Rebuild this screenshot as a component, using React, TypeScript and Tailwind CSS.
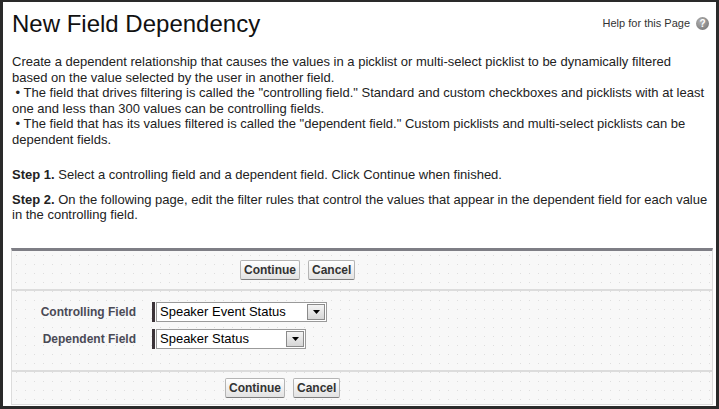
import React from 'react';

function Btn({ label }: { label: string }) {
  return (
    <button className="h-[20px] px-[3px] border border-[#b5b5b5] border-b-[#7f7f7f] rounded-[2px] bg-gradient-to-b from-white to-[#e2e2e2] text-[12px] font-bold text-[#333] leading-none">
      {label}
    </button>
  );
}

function Picklist({ value, width }: { value: string; width: string }) {
  return (
    <div className="flex items-stretch h-[20px]">
      <div className="w-[3px] bg-[#3b3338] mr-[1px]" />
      <div className={`${width} flex items-center justify-between border border-[#9a9a9a] bg-white pl-[3px] pr-[1px]`}>
        <span className="text-[13px] text-black leading-none">{value}</span>
        <span className="w-[18px] h-[16px] border border-[#8a8a8a] bg-gradient-to-b from-[#f4f4f4] to-[#d6d6d6] flex items-center justify-center">
          <svg width="7" height="4" viewBox="0 0 7 4">
            <path d="M0 0h7L3.5 4z" fill="#000" />
          </svg>
        </span>
      </div>
    </div>
  );
}

export default function App() {
  return (
    <div className="w-[719px] h-[409px] border-[3px] border-t-2 border-[#2a2a2a] bg-white font-['Liberation_Sans',Arial,sans-serif] text-[#222] overflow-hidden">
      {/* Header */}
      <div className="flex justify-between items-start pl-[9px] pr-[7px] pt-[7px]">
        <h1 className="text-[24px] leading-[30px] text-[#111]">New Field Dependency</h1>
        <div className="flex items-center gap-[6px] pt-[6px]">
          <span className="text-[11px] text-[#333]">Help for this Page</span>
          <svg width="13" height="13" viewBox="0 0 13 13">
            <defs>
              <radialGradient id="hg" cx="0.4" cy="0.35" r="0.7">
                <stop offset="0" stopColor="#b4b4b4" />
                <stop offset="1" stopColor="#7a7a7a" />
              </radialGradient>
            </defs>
            <circle cx="6.5" cy="6.5" r="6.5" fill="url(#hg)" />
            <text x="6.5" y="10" textAnchor="middle" fontSize="10" fontWeight="bold" fill="#fff" fontFamily="Liberation Sans, Arial, sans-serif">?</text>
          </svg>
        </div>
      </div>

      {/* Description */}
      <div className="pl-[9px] pr-[7px] pt-[15px] text-[13px] leading-[15.5px] text-[#222]">
        <p>
          Create a dependent relationship that causes the values in a picklist or multi-select picklist to be dynamically filtered
          based on the value selected by the user in another field.
          <br />&nbsp;• The field that drives filtering is called the "controlling field." Standard and custom checkboxes and picklists with at least
          one and less than 300 values can be controlling fields.
          <br />&nbsp;• The field that has its values filtered is called the "dependent field." Custom picklists and multi-select picklists can be
          dependent fields.
        </p>
        <p className="mt-[20px]">
          <b>Step 1.</b> Select a controlling field and a dependent field. Click Continue when finished.
        </p>
        <p className="mt-[9px]">
          <b>Step 2.</b> On the following page, edit the filter rules that control the values that appear in the dependent field for each value
          <br />in the controlling field.
        </p>
      </div>

      {/* Form panel */}
      <div className="ml-[8px] mr-[3px] mt-[25px] border-t-[3px] border-t-[#7e7e85] border-x border-b border-x-[#dcdcdc] border-b-[#dcdcdc] bg-[#f8f8f8] bg-[radial-gradient(#dedede_0.6px,transparent_0.8px)] bg-[size:9px_9px]">
        <div className="h-[40px] flex items-center pl-[228px] gap-[8px] border-b-2 border-[#dcdcdc]">
          <Btn label="Continue" />
          <Btn label="Cancel" />
        </div>
        <div className="h-[81px] pt-[11px] border-b-2 border-[#dcdcdc] flex flex-col gap-[7px]">
          <div className="flex items-center">
            <div className="w-[140px] text-right text-[12px] font-bold text-[#4a4a56] pr-[16px]">Controlling Field</div>
            <Picklist value="Speaker Event Status" width="w-[171px]" />
          </div>
          <div className="flex items-center">
            <div className="w-[140px] text-right text-[12px] font-bold text-[#4a4a56] pr-[16px]">Dependent Field</div>
            <Picklist value="Speaker Status" width="w-[150px]" />
          </div>
        </div>
        <div className="h-[32px] flex items-center pl-[213px] gap-[8px]">
          <Btn label="Continue" />
          <Btn label="Cancel" />
        </div>
      </div>
    </div>
  );
}
